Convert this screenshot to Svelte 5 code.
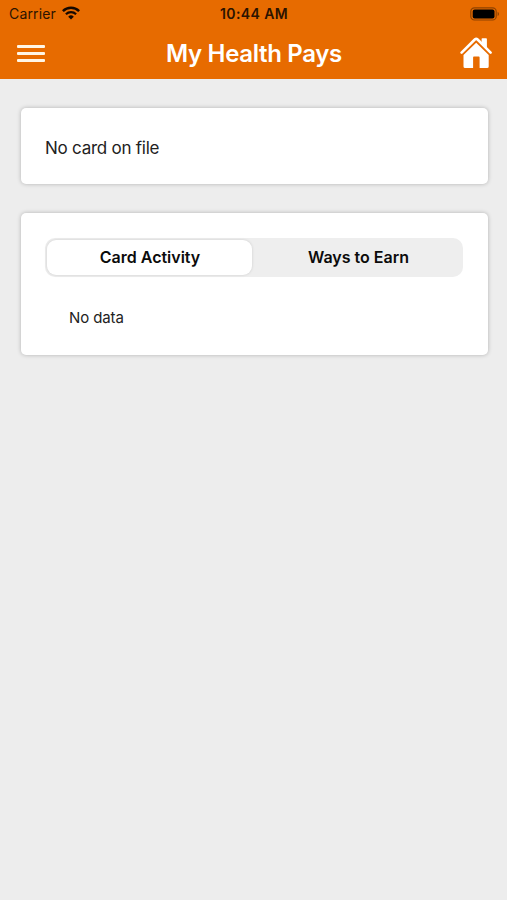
<script lang="ts">
	const tabs = ['Card Activity', 'Ways to Earn'];

	let selected = $state(0);
</script>

<div class="screen">
	<header>
		<div class="status-bar">
			<div class="carrier">
				<span>Carrier</span>
				<svg width="18" height="14" viewBox="0 0 18 14" fill="none" stroke="#160900" aria-hidden="true">
					<path d="M0.9 5.1a11.6 11.6 0 0 1 16.2 0" stroke-width="2.5" />
					<path d="M3.9 8.2a7.3 7.3 0 0 1 10.2 0" stroke-width="2.2" />
					<path d="M9 13.5 6.2 10.7a4 4 0 0 1 5.6 0Z" fill="#160900" stroke="none" />
				</svg>
			</div>
			<span class="time">10:44 AM</span>
			<svg class="battery" width="30" height="14" viewBox="0 0 30 14" aria-hidden="true">
				<rect x="0.8" y="0.8" width="25.4" height="12.2" rx="3.6" fill="none" stroke="#8f4300" stroke-width="1.2" />
				<rect x="2.7" y="2.6" width="21.8" height="8.8" rx="2" fill="#000" />
				<path d="M27.6 4.7c1.9.8 1.9 3.6 0 4.4Z" fill="#8f4300" />
			</svg>
		</div>

		<div class="nav-bar">
			<button class="menu" type="button" aria-label="Menu">
				<span></span>
				<span></span>
				<span></span>
			</button>
			<h1>My Health Pays</h1>
			<button class="home" type="button" aria-label="Home">
				<svg width="32" height="32" viewBox="0 0 32 32" fill="#fff" aria-hidden="true">
					<path d="M21.6 2.1q0-.8.8-.8h3.7q.8 0 .8.8v9.2l-5.3-5.1Z" />
					<path d="M1.6 15.6 14.8 2.5q1.4-1.3 2.8 0l13 13.1" fill="none" stroke="#fff" stroke-width="2.6" stroke-linecap="round" />
					<path d="M16.2 5.8 28.7 18.1V29.4q0 1.6-1.6 1.6H19.6V20.4q0-.8-.8-.8h-4.9q-.8 0-.8.8V31H5.1q-1.6 0-1.6-1.6V18.1Z" />
				</svg>
			</button>
		</div>
	</header>

	<main>
		<section class="card">
			<p class="card-status">No card on file</p>
		</section>

		<section class="card activity">
			<div class="segments" role="tablist">
				{#each tabs as tab, i}
					<button
						type="button"
						role="tab"
						class:active={selected === i}
						aria-selected={selected === i}
						onclick={() => (selected = i)}
					>
						{tab}
					</button>
				{/each}
			</div>
			<p class="empty">No data</p>
		</section>
	</main>
</div>

<style>
	:global(body) {
		margin: 0;
		background: #ededed;
	}

	.screen {
		min-height: 100vh;
		background: #ededed;
		font-family: Inter, 'Liberation Sans', sans-serif;
		color: #222;
	}

	header {
		height: 79px;
		background: #e76b00;
	}

	button {
		padding: 0;
		border: 0;
		background: none;
		font: inherit;
		color: inherit;
	}

	.status-bar {
		display: grid;
		grid-template-columns: 1fr auto 1fr;
		align-items: center;
		height: 27px;
		padding: 0 8px 0 9px;
		font-size: 14px;
		color: #2b1300;
	}

	.carrier {
		display: flex;
		align-items: center;
		gap: 6px;
		letter-spacing: 0.15px;
	}

	.carrier svg {
		margin-top: -1px;
	}

	.time {
		font-weight: 600;
		letter-spacing: 0.4px;
	}

	.battery {
		justify-self: end;
		margin-right: -1px;
	}

	.nav-bar {
		display: grid;
		grid-template-columns: 1fr auto 1fr;
		align-items: center;
		height: 52px;
		padding: 0 15px 0 16px;
	}

	.menu {
		display: grid;
		gap: 4px;
		width: 28px;
		margin-left: 1px;
	}

	.menu span {
		height: 3px;
		border-radius: 1px;
		background: #fff6e6;
	}

	h1 {
		margin: 0;
		font-size: 24px;
		font-weight: 600;
		line-height: 53px;
		letter-spacing: -0.33px;
		color: #fff;
	}

	.home {
		justify-self: end;
		height: 32px;
		margin-bottom: 2px;
	}

	.home svg {
		display: block;
	}

	main {
		display: grid;
		gap: 29px;
		padding: 29px 19px 0 21px;
	}

	.card {
		box-sizing: border-box;
		height: 76px;
		padding: 0 25px 0 24px;
		border-radius: 5px;
		background: #fff;
		box-shadow: 0 0 4px rgba(0, 0, 0, 0.25);
	}

	.card-status {
		margin: 0;
		font-size: 17px;
		line-height: 80px;
		letter-spacing: -0.25px;
	}

	.activity {
		height: 142px;
		padding-top: 25px;
	}

	.segments {
		display: grid;
		grid-template-columns: 205px 1fr;
		box-sizing: border-box;
		height: 39px;
		padding: 2px;
		border-radius: 10px;
		background: #eee;
	}

	.segments button {
		padding: 0 0 2px 1px;
		border-radius: 9px;
		font-size: 16px;
		font-weight: 600;
		color: #0b0b0b;
	}

	.segments .active {
		background: #fff;
		box-shadow: 0 0 3px rgba(0, 0, 0, 0.14);
	}

	.segments button:last-child {
		padding-left: 4px;
	}

	.empty {
		margin: 31px 24px 0;
		font-size: 15px;
		line-height: 20px;
		letter-spacing: -0.1px;
	}
</style>
